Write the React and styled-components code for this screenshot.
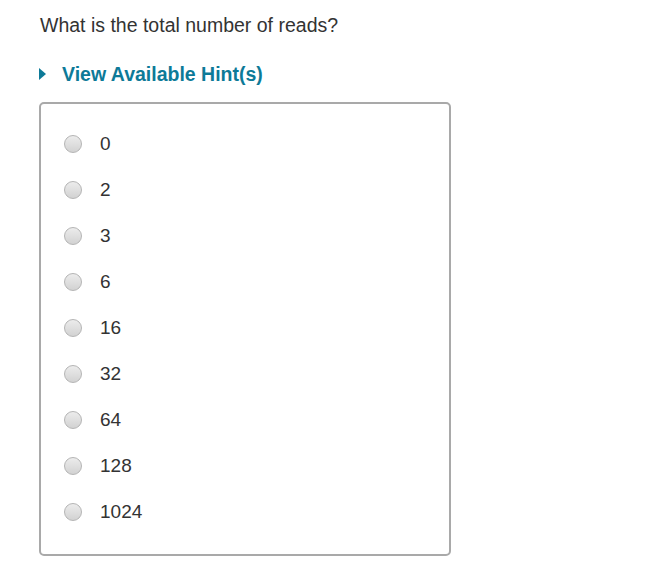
import React from 'react';
import styled, { createGlobalStyle } from 'styled-components';

const GlobalStyle = createGlobalStyle`
  body {
    margin: 0;
    background: #fff;
    font-family: "Liberation Sans", Arial, sans-serif;
  }
`;

const Page = styled.div`
  padding: 13px 0 0 39px;
  width: 412px;
`;

const Question = styled.div`
  font-size: 19.5px;
  line-height: 24px;
  color: #333;
  padding-left: 1px;
`;

const Hint = styled.div`
  margin-top: 25px;
  display: flex;
  align-items: center;
  gap: 16px;
  font-size: 19.5px;
  line-height: 24px;
  font-weight: bold;
  color: #0d7a98;
  cursor: pointer;
`;

const Caret = styled.span`
  width: 0;
  height: 0;
  border-top: 6.5px solid transparent;
  border-bottom: 6.5px solid transparent;
  border-left: 7px solid #0d7a98;
`;

const Choices = styled.div`
  margin-top: 16px;
  border: 2px solid #a9a9a9;
  border-radius: 5px;
  padding: 17px 0 19px 23px;
`;

const Row = styled.label`
  display: flex;
  align-items: center;
  height: 46px;
  gap: 18px;
  font-size: 19px;
  color: #333;
`;

const Radio = styled.span`
  width: 16px;
  height: 16px;
  border-radius: 50%;
  border: 1px solid #b4b4b4;
  background: linear-gradient(#ececec, #d2d2d2);
  flex-shrink: 0;
`;

const options = ['0', '2', '3', '6', '16', '32', '64', '128', '1024'];

export default function App() {
  return (
    <Page>
      <GlobalStyle />
      <Question>What is the total number of reads?</Question>
      <Hint>
        <Caret />
        View Available Hint(s)
      </Hint>
      <Choices>
        {options.map((o) => (
          <Row key={o}>
            <Radio />
            {o}
          </Row>
        ))}
      </Choices>
    </Page>
  );
}
